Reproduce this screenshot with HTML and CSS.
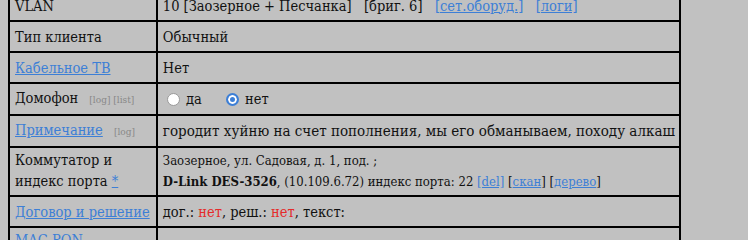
FILE: index.html
```html
<!DOCTYPE html>
<html>
<head>
    <title>Абонент</title>
    <link rel="stylesheet" href="styles.css">
</head>
<body>
    <table class="info">
        <tr>
            <td class="name">VLAN</td>
            <td>10 [Заозерное + Песчанка] &nbsp; [бриг. 6] &nbsp; <a href="#">[сет.оборуд.]</a> &nbsp; <a href="#">[логи]</a></td>
        </tr>
        <tr>
            <td class="name">Тип клиента</td>
            <td>Обычный</td>
        </tr>
        <tr>
            <td class="name"><a href="#">Кабельное ТВ</a></td>
            <td>Нет</td>
        </tr>
        <tr>
            <td class="name">Домофон <span class="small">[log] [list]</span></td>
            <td>
                <label class="opt"><input type="radio" name="dom"> да</label>
                <label class="opt"><input type="radio" name="dom" checked> нет</label>
            </td>
        </tr>
        <tr>
            <td class="name"><a href="#">Примечание</a> <span class="small">[log]</span></td>
            <td class="note">городит хуйню на счет пополнения, мы его обманываем, походу алкаш</td>
        </tr>
        <tr class="tall">
            <td class="name">Коммутатор и индекс порта <a href="#">*</a></td>
            <td class="switch">
                Заозерное, ул. Садовая, д. 1, под. ;<br>
                <b>D-Link DES-3526</b>, (10.109.6.72) индекс порта: 22 <a href="#">[del]</a> [<a href="#">скан</a>] [<a href="#">дерево</a>]
            </td>
        </tr>
        <tr>
            <td class="name"><a href="#">Договор и решение</a></td>
            <td>дог.: <span class="no">нет</span>, реш.: <span class="no">нет</span>, текст:</td>
        </tr>
        <tr>
            <td class="name mac"><a href="#">MAC PON</a></td>
            <td></td>
        </tr>
    </table>
</body>
</html>
```

FILE: styles.css
```css
body {
    margin: 0;
    padding: 0 8px;
    background-color: #c1c1c1;
    color: #111;
    font-family: "DejaVu Serif Condensed", "DejaVu Serif", serif;
    font-stretch: condensed;
    font-size: 14.5px;
    overflow: hidden;
}

a {
    color: #3d7fd6;
}

.info {
    margin-top: -11px;
    width: 673px;
    border-collapse: collapse;
    border: 2px solid #000;
}

.info td {
    border: 2px solid #000;
    padding: 5px 4px 5px 5px;
    height: 19px;
    line-height: 18px;
    vertical-align: middle;
    white-space: nowrap;
}

.info td.name {
    width: 139px;
    white-space: normal;
}

.info .tall td {
    height: auto;
    line-height: 21px;
    padding-top: 2px;
    padding-bottom: 3px;
}

.info td.mac {
    vertical-align: top;
    padding-top: 3px;
}

.note {
    font-size: 15px;
}

.small {
    font-size: 10px;
    color: #888;
    margin-left: 7px;
}

.switch {
    font-size: 13px;
}

.no {
    color: #e52b2b;
}

.opt {
    margin-left: 4px;
    margin-right: 16px;
}

.opt input {
    appearance: none;
    width: 13px;
    height: 13px;
    margin: 0 2px 0 0;
    border-radius: 50%;
    background: #fff;
    border: 1px solid #999;
    vertical-align: -2px;
}

.opt input:checked {
    border: 2px solid #3d7fd6;
    box-shadow: inset 0 0 0 2px #fff;
    background: #3d7fd6;
}
```
